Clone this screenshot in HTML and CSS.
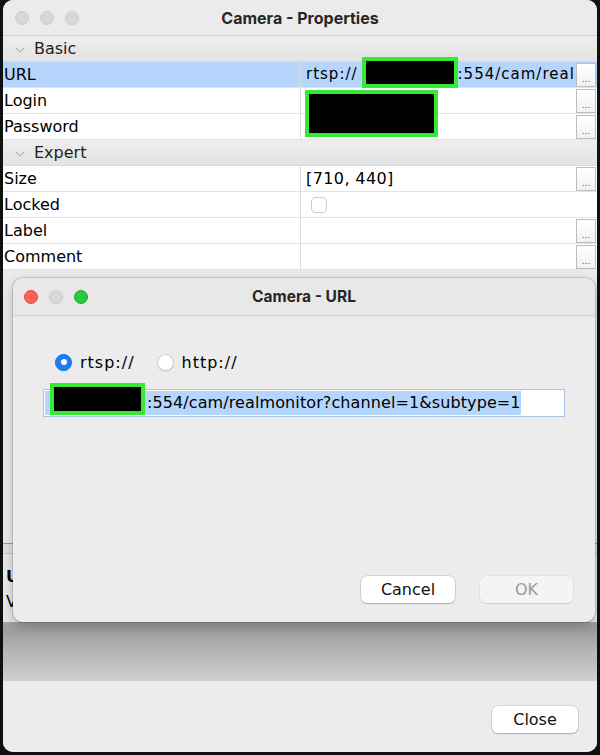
FILE: index.html
```html
<!DOCTYPE html>
<html>
<head>
<meta charset="utf-8">
<link rel="stylesheet" href="styles.css">
</head>
<body>
<div class="desk">
  <div class="win">
    <div class="titlebar">
      <div class="lights">
        <span class="dot off"></span><span class="dot off"></span><span class="dot off"></span>
      </div>
      <div class="title">Camera - Properties</div>
      <div></div>
    </div>

    <div class="sheet">
      <div class="section">
        <svg class="chev" width="10" height="6" viewBox="0 0 10 6"><polyline points="1,1 5,5 9,1" fill="none" stroke="#b4b4b4" stroke-width="1.2"/></svg>
        <span>Basic</span>
      </div>
      <div class="row sel">
        <div class="key">URL</div>
        <div class="val"><span class="vtext url">rtsp://<span class="host"></span>:554/cam/real</span><span class="more">...</span></div>
      </div>
      <div class="row">
        <div class="key">Login</div>
        <div class="val"><span class="vtext"></span><span class="more">...</span></div>
      </div>
      <div class="row">
        <div class="key">Password</div>
        <div class="val"><span class="vtext"></span><span class="more">...</span></div>
      </div>
      <div class="section">
        <svg class="chev" width="10" height="6" viewBox="0 0 10 6"><polyline points="1,1 5,5 9,1" fill="none" stroke="#b4b4b4" stroke-width="1.2"/></svg>
        <span>Expert</span>
      </div>
      <div class="row">
        <div class="key">Size</div>
        <div class="val"><span class="vtext">[710, 440]</span><span class="more">...</span></div>
      </div>
      <div class="row">
        <div class="key">Locked</div>
        <div class="val"><span class="check"></span></div>
      </div>
      <div class="row">
        <div class="key">Label</div>
        <div class="val"><span class="vtext"></span><span class="more">...</span></div>
      </div>
      <div class="row">
        <div class="key">Comment</div>
        <div class="val"><span class="vtext"></span><span class="more">...</span></div>
      </div>
    </div>

    <div class="under">
      <div class="pane-top"></div>
      <div class="pane-mid"></div>
      <div class="pane-info">
        <div class="info-head">U</div>
        <div class="info-line">V</div>
      </div>
    </div>
    <div class="shade"></div>
    <div class="footer">
      <button class="btn">Close</button>
    </div>
  </div>

  <div class="redact r-url"></div>
  <div class="redact r-login"></div>

  <div class="dialog">
    <div class="dtitlebar">
      <div class="lights">
        <span class="dot red"></span><span class="dot off"></span><span class="dot green"></span>
      </div>
      <div class="title dtitle">Camera - URL</div>
      <div></div>
    </div>
    <div class="dbody">
      <div class="radios">
        <label class="radio"><span class="rb on"></span><span>rtsp://</span></label>
        <label class="radio"><span class="rb"></span><span>http://</span></label>
      </div>
      <div class="field"><span class="selected"><span class="host2"></span>:554/cam/realmonitor?channel=1&amp;subtype=1</span></div>
      <div class="actions">
        <button class="btn cancel">Cancel</button>
        <button class="btn ok">OK</button>
      </div>
    </div>
    <div class="redact r-field"></div>
  </div>
</div>
</body>
</html>
```

FILE: styles.css
```css
html, body {
  margin: 0;
  padding: 0;
}
body {
  width: 600px;
  height: 755px;
  overflow: hidden;
  background: #101010;
  font-family: "DejaVu Sans", "Noto Sans", sans-serif;
  font-size: 16px;
  color: #000;
}
.desk {
  position: relative;
  width: 600px;
  height: 755px;
}
.win {
  margin-left: 3px;
  width: 594px;
  height: 752px;
  background: #ececec;
  border-radius: 10px;
  overflow: hidden;
  display: flex;
  flex-direction: column;
}
.titlebar {
  flex: none;
  height: 36px;
  box-sizing: border-box;
  background: #ebebeb;
  border-bottom: 1px solid #d3d3d3;
  display: grid;
  grid-template-columns: 100px 1fr 100px;
  align-items: center;
}
.lights {
  display: flex;
  gap: 11px;
  padding-left: 12px;
}
.dot {
  width: 14px;
  height: 14px;
  border-radius: 50%;
  box-sizing: border-box;
}
.dot.off {
  background: #d8d8d8;
  border: 1px solid #cdcdcd;
}
.dot.red {
  background: #fe5f57;
  border: 1px solid #e2463f;
}
.dot.green {
  background: #28c840;
  border: 1px solid #1daa2c;
}
.title {
  text-align: center;
  font-family: Inter, "Liberation Sans", sans-serif;
  font-weight: 700;
  font-size: 16px;
  color: #262626;
}
.dtitle {
  font-size: 15.5px;
}

.sheet {
  flex: none;
  display: flex;
  flex-direction: column;
}
.section {
  height: 26px;
  box-sizing: border-box;
  display: flex;
  align-items: center;
  gap: 9px;
  padding-left: 12px;
  background: linear-gradient(#eeeeee, #e3e3e3);
  border-bottom: 1px solid #d9d9d9;
  color: #1e1e1e;
}
.chev {
  display: block;
  margin-top: 2px;
}
.row {
  height: 26px;
  box-sizing: border-box;
  display: grid;
  grid-template-columns: 297px minmax(0, 1fr);
  background: #fff;
  border-bottom: 1px solid #e4e4e4;
}
.key {
  padding-left: 1px;
  line-height: 25px;
  white-space: nowrap;
}
.val {
  border-left: 1px solid #dcdcdc;
  display: flex;
  align-items: center;
  padding-left: 5px;
  min-width: 0;
  overflow: hidden;
}
.vtext {
  flex: 1;
  min-width: 0;
  overflow: hidden;
  white-space: nowrap;
  letter-spacing: 0.4px;
  line-height: 25px;
}
.vtext.url {
  font-size: 15px;
  letter-spacing: 1px;
}
.host {
  display: inline-block;
  width: 100px;
}
.row.sel {
  background: #b5d5fc;
}
.more {
  flex: none;
  width: 20px;
  height: 24px;
  margin-right: 1px;
  box-sizing: border-box;
  border: 1px solid #bdbdbd;
  background: linear-gradient(#ffffff, #f1f1f1);
  font-size: 9px;
  color: #555;
  display: flex;
  justify-content: center;
  align-items: flex-end;
  padding-bottom: 2px;
  letter-spacing: 0;
}
.check {
  width: 16px;
  height: 16px;
  margin-left: 5px;
  box-sizing: border-box;
  border: 1px solid #cfcfcf;
  border-radius: 4px;
  background: #fff;
}

.under {
  flex: 1;
  display: flex;
  flex-direction: column;
}
.pane-top {
  height: 273px;
  background: #ebebeb;
  border-bottom: 1px solid #8d9bd6;
}
.pane-mid {
  height: 9px;
  background: #e2e2e2;
  border-bottom: 1px solid #c9c9c9;
}
.pane-info {
  flex: 1;
  background: #e9e9e9;
  padding: 10px 0 0 3px;
  line-height: 25px;
}
.info-head {
  font-weight: 700;
}
.shade {
  flex: none;
  height: 59px;
  background: linear-gradient(#a4a4a4, #9d9d9d 12%, #b8b8b8 55%, #cfcfcf);
}
.footer {
  flex: none;
  height: 71px;
  box-sizing: border-box;
  background: #ececec;
  display: flex;
  justify-content: flex-end;
  align-items: flex-start;
  padding: 25px 19px 0 0;
}
.btn {
  font-family: "DejaVu Sans", sans-serif;
  font-size: 16px;
  color: #111;
  background: #fff;
  border: none;
  border-radius: 6px;
  box-shadow: 0 0 0 0.5px rgba(0, 0, 0, 0.18), 0 1px 1.5px rgba(0, 0, 0, 0.2);
  width: 86px;
  height: 27px;
  padding: 0;
}

.redact {
  position: absolute;
  box-sizing: border-box;
  background: #000;
  border: 4px solid #35ea35;
}
.r-url {
  left: 362px;
  top: 57px;
  width: 96px;
  height: 31px;
}
.r-login {
  left: 305px;
  top: 90px;
  width: 133px;
  height: 47px;
}

.dialog {
  position: absolute;
  left: 13px;
  top: 278px;
  width: 582px;
  height: 344px;
  border-radius: 10px;
  background: #ececec;
  box-shadow: 0 0 0 1px rgba(0, 0, 0, 0.12), 0 4px 12px rgba(0, 0, 0, 0.25);
  display: flex;
  flex-direction: column;
}
.dtitlebar {
  flex: none;
  height: 38px;
  box-sizing: border-box;
  background: #e8e8e8;
  border-bottom: 1px solid #d2d2d2;
  border-radius: 10px 10px 0 0;
  display: grid;
  grid-template-columns: 100px 1fr 100px;
  align-items: center;
}
.dtitlebar .lights {
  padding-left: 11px;
}
.dbody {
  flex: 1;
  display: flex;
  flex-direction: column;
  padding: 36px 22px 19px 30px;
}
.radios {
  display: flex;
  align-items: center;
  height: 20px;
  padding-left: 12px;
  gap: 22px;
}
.radio {
  display: flex;
  align-items: center;
  gap: 8px;
  letter-spacing: 1px;
}
.rb {
  width: 17px;
  height: 17px;
  border-radius: 50%;
  box-sizing: border-box;
  background: #fff;
  border: 1px solid #c8c8c8;
  box-shadow: 0 1px 1px rgba(0, 0, 0, 0.08);
  display: flex;
  align-items: center;
  justify-content: center;
}
.rb.on {
  background: #1b7cf4;
  border-color: #1670e0;
}
.rb.on::after {
  content: "";
  width: 6px;
  height: 6px;
  border-radius: 50%;
  background: #fff;
}
.field {
  margin-top: 17px;
  height: 28px;
  box-sizing: border-box;
  width: 522px;
  background: #fff;
  border: 1px solid #a9c3e6;
  padding: 1px 0 1px 1px;
  white-space: nowrap;
  overflow: hidden;
}
.selected {
  display: inline-block;
  height: 24px;
  line-height: 24px;
  background: #b4d6fd;
  letter-spacing: 0.1px;
}
.host2 {
  display: inline-block;
  width: 102px;
}
.actions {
  margin-top: auto;
  display: flex;
  justify-content: flex-end;
  gap: 25px;
}
.cancel {
  width: 94px;
}
.ok {
  width: 93px;
  background: #f4f4f4;
  color: #9a9a9a;
  box-shadow: 0 0 0 0.5px rgba(0, 0, 0, 0.08), 0 1px 1px rgba(0, 0, 0, 0.08);
}
.r-field {
  left: 37px;
  top: 105px;
  width: 95px;
  height: 32px;
}
```
